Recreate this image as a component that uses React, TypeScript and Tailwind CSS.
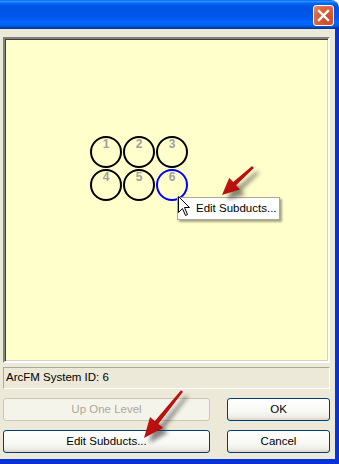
import React from "react";

function arrowPoly(tx: number, ty: number, hx: number, hy: number, shaft: number, headLen: number, headW: number) {
  const dx = hx - tx;
  const dy = hy - ty;
  const len = Math.sqrt(dx * dx + dy * dy);
  const ux = dx / len;
  const uy = dy / len;
  const px = -uy;
  const py = ux;
  const bx = hx - ux * headLen;
  const by = hy - uy * headLen;
  const s = shaft / 2;
  const w = headW / 2;
  const pts = [
    [tx + px * s * 0.6, ty + py * s * 0.6],
    [bx + px * s, by + py * s],
    [bx + px * w, by + py * w],
    [hx, hy],
    [bx - px * w, by - py * w],
    [bx - px * s, by - py * s],
    [tx - px * s * 0.6, ty - py * s * 0.6],
  ];
  return pts.map((p) => `${p[0].toFixed(1)},${p[1].toFixed(1)}`).join(" ");
}

const font = { fontFamily: '"Liberation Sans", Arial, sans-serif' };

function XPButton({ label, disabled, className }: { label: string; disabled?: boolean; className: string }) {
  return (
    <div
      className={
        "flex items-center justify-center rounded-[3px] border text-[11.5px] " +
        (disabled
          ? "border-[#C9C7BA] bg-[#F5F4EA] text-[#ACA899] "
          : "border-[#003C74] bg-[linear-gradient(to_bottom,#FFFFFF_0%,#F8F8F5_60%,#EEEDE6_85%,#D8D4C8_100%)] text-black ") +
        className
      }
      style={font}
    >
      {label}
    </div>
  );
}

export default function App() {
  const circles = [
    { x: 106, y: 152, n: "1", c: "#000" },
    { x: 139, y: 152, n: "2", c: "#000" },
    { x: 172, y: 152, n: "3", c: "#000" },
    { x: 106, y: 185, n: "4", c: "#000" },
    { x: 139, y: 185, n: "5", c: "#000" },
    { x: 172, y: 185, n: "6", c: "#0000FF" },
  ];
  const a1 = arrowPoly(253, 167, 222, 195, 4.5, 17, 16);
  const a2 = arrowPoly(182, 391, 144, 438, 4.5, 20, 17);
  return (
    <div className="relative flex h-[464px] w-[339px] flex-col overflow-hidden bg-white" style={font}>
      {/* Title bar */}
      <div className="flex h-[29px] shrink-0 items-start justify-end rounded-tr-[8px] bg-[linear-gradient(to_bottom,#0058EE_0%,#3593FF_4%,#288EFF_6%,#127DFF_8%,#036FFC_10%,#0262EE_14%,#0057E5_20%,#0054E3_24%,#0055EB_56%,#005BF5_66%,#026AFE_76%,#0062EF_86%,#0052D6_92%,#0040AB_96%,#003092_100%)] pr-[5px] pt-[5px]">
        <div className="flex h-[21px] w-[21px] items-center justify-center rounded-[3px] border border-white bg-[radial-gradient(circle_at_70%_70%,#CC4626_0%,#DC6039_55%,#E88A6C_100%)]">
          <svg width="13" height="13" viewBox="0 0 13 13">
            <path d="M2 2 L11 11 M11 2 L2 11" stroke="white" strokeWidth="2.4" strokeLinecap="square" />
          </svg>
        </div>
      </div>

      {/* Body with frame */}
      <div className="flex flex-1 flex-col border-b-[5px] border-r-[4px] border-b-[#0831D9] border-r-[#0831D9] bg-[#ECE9D8] px-[3px]">
        {/* Canvas */}
        <div className="relative mt-[8px] h-[326px] w-[327px] border-2 border-b-white border-l-[#808080] border-r-white border-t-[#808080] bg-[#FFFFCC] shadow-[inset_1px_1px_0_#404040,inset_-1px_-1px_0_#D4D0C8]">
          <svg className="absolute inset-0" width="323" height="322" viewBox="5 39 323 322">
            {circles.map((c) => (
              <g key={c.n}>
                <circle cx={c.x} cy={c.y} r="15" fill="none" stroke={c.c} strokeWidth="2" />
                <text
                  x={c.x}
                  y={c.y - 4}
                  textAnchor="middle"
                  fontSize="12"
                  fontWeight="bold"
                  fill="#A0A0A0"
                  fontFamily='"Liberation Sans", Arial, sans-serif'
                >
                  {c.n}
                </text>
              </g>
            ))}
          </svg>
          {/* context menu */}
          <div className="absolute left-[172px] top-[158px] flex h-[23px] w-[103px] items-center border border-[#ACA899] bg-white pl-[18px] text-[11.5px] text-black shadow-[2px_2px_2px_rgba(0,0,0,0.35)]">
            Edit Subducts...
          </div>
          {/* cursor */}
          <svg className="absolute left-[173px] top-[157px]" width="13" height="21" viewBox="0 0 13 21">
            <polygon points="0.5,0.5 0.5,16.5 4.5,12.5 7.5,19.5 9.5,18.5 6.5,11.5 11.5,11.5" fill="white" stroke="black" strokeWidth="1" strokeLinejoin="miter" />
          </svg>
        </div>

        {/* Status bar */}
        <div className="mt-[4px] flex h-[22px] w-[327px] items-center border border-b-white border-l-[#ACA899] border-r-white border-t-[#ACA899] pl-[2px] text-[11.5px] text-black">
          ArcFM System ID: 6
        </div>

        {/* Buttons */}
        <div className="mt-[9px] flex w-[327px] justify-between">
          <XPButton label="Up One Level" disabled className="h-[23px] w-[207px]" />
          <XPButton label="OK" className="h-[23px] w-[103px]" />
        </div>
        <div className="mt-[9px] flex w-[327px] justify-between">
          <XPButton label="Edit Subducts..." className="h-[23px] w-[207px]" />
          <XPButton label="Cancel" className="h-[23px] w-[103px]" />
        </div>
      </div>

      {/* Red arrows overlay */}
      <svg className="pointer-events-none absolute inset-0" width="339" height="464" viewBox="0 0 339 464">
        <defs>
          <filter id="blur" x="-30%" y="-30%" width="160%" height="160%">
            <feGaussianBlur stdDeviation="2" />
          </filter>
          <linearGradient id="red" x1="0" y1="0" x2="1" y2="1">
            <stop offset="0" stopColor="#D42020" />
            <stop offset="1" stopColor="#A00000" />
          </linearGradient>
        </defs>
        <g filter="url(#blur)" opacity="0.6" transform="translate(5,5)">
          <polygon points={a1} fill="#303030" />
          <polygon points={a2} fill="#303030" />
        </g>
        <polygon points={a1} fill="url(#red)" />
        <polygon points={a2} fill="url(#red)" />
      </svg>
    </div>
  );
}
